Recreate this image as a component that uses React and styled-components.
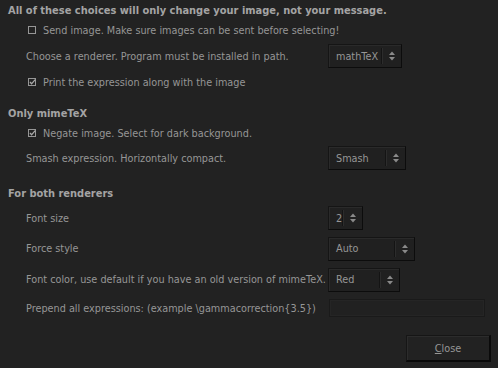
import React from 'react';
import styled, { createGlobalStyle } from 'styled-components';

const GlobalStyle = createGlobalStyle`
  html, body {
    margin: 0;
    padding: 0;
    background: #222222;
  }
  body {
    font-family: "DejaVu Sans", "Liberation Sans", sans-serif;
    font-size: 9.7px;
    color: #969696;
  }
`;

const Dialog = styled.div`
  width: 498px;
  height: 368px;
  background: #222222;
  padding: 0 8px;
  box-sizing: border-box;
  display: flex;
  flex-direction: column;
`;

const Heading = styled.div`
  height: 20px;
  display: flex;
  align-items: center;
  font-size: 9.9px;
  font-weight: bold;
  color: #a4a4a4;
  margin-top: ${p => p.$gap || 0}px;
`;

const Row = styled.div`
  height: ${p => p.$h}px;
  display: grid;
  grid-template-columns: 302px auto;
  align-items: center;
  padding-left: 18px;
`;

const Label = styled.span`
  white-space: nowrap;
`;

const CheckRow = styled.label`
  height: 20px;
  display: flex;
  align-items: center;
  gap: 6px;
  padding-left: 20px;
`;

const Box = styled.svg`
  width: 9px;
  height: 9px;
  flex: none;
`;

const Combo = styled.div`
  width: ${p => p.$w}px;
  height: 24px;
  box-sizing: border-box;
  display: flex;
  align-items: center;
  background: #202020;
  border: 1px solid #151515;
  border-right-color: #0c0c0c;
  border-bottom-color: #0c0c0c;
  box-shadow: inset 1px 1px 0 #2a2a2a;
`;

const ComboText = styled.span`
  flex: 1;
  padding-left: 7px;
  color: #969696;
`;

const Sep = styled.span`
  width: 1px;
  height: 16px;
  background: #141414;
  border-right: 1px solid #2c2c2c;
`;

const Arrows = styled.svg`
  width: 18px;
  height: 14px;
  flex: none;
`;

const TextField = styled.div`
  width: 156px;
  height: 18px;
  box-sizing: border-box;
  border: 1px solid #1a1a1a;
  background: #212121;
  box-shadow: inset 0 0 0 1px #252525;
  margin-left: 1px;
`;

const Footer = styled.div`
  flex: 1;
  display: flex;
  justify-content: flex-end;
  align-items: flex-start;
  padding-top: 14px;
`;

const Button = styled.button`
  width: 85px;
  height: 27px;
  margin-right: -1px;
  background: #222;
  color: #969696;
  font: inherit;
  border: 1px solid #161616;
  border-right: 2px solid #0a0a0a;
  border-bottom: 2px solid #0a0a0a;
  box-shadow: inset 1px 1px 0 #2c2c2c;
  cursor: pointer;
`;

const Check = ({ checked }) => (
  <Box viewBox="0 0 9 9">
    <rect x="0.5" y="0.5" width="7" height="7" fill="none" stroke="#969696" strokeWidth="1" />
    {checked && <path d="M2 4 L3.6 5.8 L7.2 1.6" fill="none" stroke="#aaaaaa" strokeWidth="1.3" />}
  </Box>
);

const Select = ({ width, value }) => (
  <Combo $w={width}>
    <ComboText>{value}</ComboText>
    <Sep />
    <Arrows viewBox="0 0 18 14">
      <path d="M6 6 L9 2.5 L12 6 Z" fill="#8a8a8a" />
      <path d="M6 8 L9 11.5 L12 8 Z" fill="#8a8a8a" />
    </Arrows>
  </Combo>
);

const App = () => (
  <>
    <GlobalStyle />
    <Dialog>
      <Heading>All of these choices will only change your image, not your message.</Heading>
      <CheckRow><Check /> Send image. Make sure images can be sent before selecting!</CheckRow>
      <Row $h={32}>
        <Label>Choose a renderer. Program must be installed in path.</Label>
        <Select width={74} value="mathTeX" />
      </Row>
      <CheckRow><Check checked /> Print the expression along with the image</CheckRow>

      <Heading $gap={11}>Only mimeTeX</Heading>
      <CheckRow><Check checked /> Negate image. Select for dark background.</CheckRow>
      <Row $h={30}>
        <Label>Smash expression. Horizontally compact.</Label>
        <Select width={78} value="Smash" />
      </Row>

      <Heading $gap={10}>For both renderers</Heading>
      <Row $h={30}>
        <Label>Font size</Label>
        <Select width={35} value="2" />
      </Row>
      <Row $h={31}>
        <Label>Force style</Label>
        <Select width={87} value="Auto" />
      </Row>
      <Row $h={31}>
        <Label>Font color, use default if you have an old version of mimeTeX.</Label>
        <Select width={72} value="Red" />
      </Row>
      <Row $h={26}>
        <Label>Prepend all expressions: (example \gammacorrection{'{3.5}'})</Label>
        <TextField />
      </Row>
      <Footer>
        <Button><u>C</u>lose</Button>
      </Footer>
    </Dialog>
  </>
);

export default App;
